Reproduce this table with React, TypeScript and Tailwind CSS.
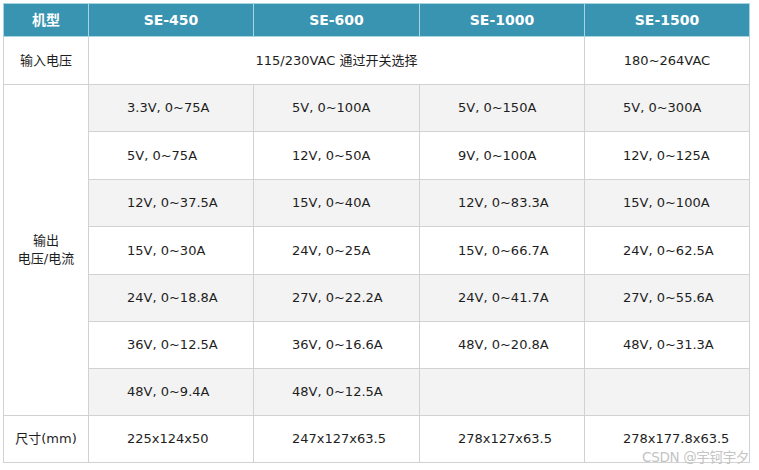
const models = ["SE-450", "SE-600", "SE-1000", "SE-1500"];

const outputs: string[][] = [
  ["3.3V, 0~75A", "5V, 0~100A", "5V, 0~150A", "5V, 0~300A"],
  ["5V, 0~75A", "12V, 0~50A", "9V, 0~100A", "12V, 0~125A"],
  ["12V, 0~37.5A", "15V, 0~40A", "12V, 0~83.3A", "15V, 0~100A"],
  ["15V, 0~30A", "24V, 0~25A", "15V, 0~66.7A", "24V, 0~62.5A"],
  ["24V, 0~18.8A", "27V, 0~22.2A", "24V, 0~41.7A", "27V, 0~55.6A"],
  ["36V, 0~12.5A", "36V, 0~16.6A", "48V, 0~20.8A", "48V, 0~31.3A"],
  ["48V, 0~9.4A", "48V, 0~12.5A", "", ""],
];

const sizes = ["225x124x50", "247x127x63.5", "278x127x63.5", "278x177.8x63.5"];

const cell = "border border-[#d2d2d2] pl-[38px] text-left";
const label = "border border-[#d2d2d2] text-center";

export default function App() {
  return (
    <div
      className="relative w-[759px] h-[470px] bg-white pt-[3px] pl-[3px] text-[13px] text-[#1e1e1e]"
      style={{ fontFamily: '"DejaVu Sans", "Noto Sans CJK SC", sans-serif' }}
    >
      <table className="table-fixed border-collapse w-[746px]">
        <colgroup>
          <col className="w-[85px]" />
          <col className="w-[165px]" />
          <col className="w-[166px]" />
          <col className="w-[165px]" />
          <col className="w-[165px]" />
        </colgroup>
        <thead>
          <tr className="h-[33px] bg-[#3894b1] text-white font-bold text-[14px]">
            <th className="border border-[#a9d3e1]">机型</th>
            {models.map(m => (
              <th key={m} className="border border-[#a9d3e1]">{m}</th>
            ))}
          </tr>
        </thead>
        <tbody>
          <tr className="h-[48px]">
            <td className={label}>输入电压</td>
            <td colSpan={3} className="border border-[#d2d2d2] text-center">115/230VAC 通过开关选择</td>
            <td className="border border-[#d2d2d2] text-center">180~264VAC</td>
          </tr>
          {outputs.map((row, i) => (
            <tr
              key={i}
              className={(i === 1 || i === 3 ? "h-[48px] " : "h-[47px] ") + (i % 2 === 0 ? "bg-[#f3f3f3]" : "bg-white")}
            >
              {i === 0 && (
                <td rowSpan={outputs.length} className={label + " bg-white leading-[18px]"}>
                  输出<br />电压/电流
                </td>
              )}
              {row.map((v, j) => (
                <td key={j} className={cell}>{v}</td>
              ))}
            </tr>
          ))}
          <tr className="h-[47px]">
            <td className={label}>尺寸(mm)</td>
            {sizes.map(s => (
              <td key={s} className={cell}>{s}</td>
            ))}
          </tr>
        </tbody>
      </table>
      <div className="absolute right-[10px] top-[447px] text-[13.5px] text-[#c4c4c4] tracking-tight">
        CSDN @宇钶宇夕
      </div>
    </div>
  );
}
